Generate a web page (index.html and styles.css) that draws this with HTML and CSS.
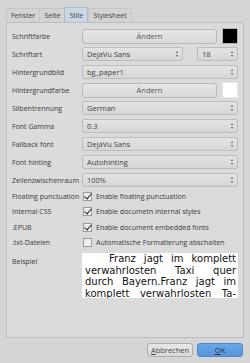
FILE: index.html
```html
<!DOCTYPE html>
<html lang="de">
<head>
  <meta charset="UTF-8">
  <title>Einstellungen</title>
  <link rel="stylesheet" href="styles.css">
</head>
<body>
  <div class="dialog">
    <!-- Tab bar -->
    <div class="tabs">
      <span class="tab">Fenster</span>
      <span class="tab">Seite</span>
      <span class="tab active">Stile</span>
      <span class="tab">Stylesheet</span>
    </div>

    <!-- Tab page -->
    <div class="page">
      <div class="row">
        <span class="label">Schriftfarbe</span>
        <div class="ctl">
          <span class="btn grow">Ändern</span>
          <span class="swatch black"></span>
        </div>
      </div>
      <div class="row">
        <span class="label">Schriftart</span>
        <div class="ctl split">
          <span class="combo font">DejaVu Sans<i class="arr"></i></span>
          <span class="combo size">18<i class="arr"></i></span>
        </div>
      </div>
      <div class="row">
        <span class="label">Hintergrundbild</span>
        <div class="ctl"><span class="combo grow">bg_paper1<i class="arr"></i></span></div>
      </div>
      <div class="row">
        <span class="label">Hintergrundfarbe</span>
        <div class="ctl">
          <span class="btn grow">Ändern</span>
          <span class="swatch white"></span>
        </div>
      </div>
      <div class="row">
        <span class="label">Silbentrennung</span>
        <div class="ctl"><span class="combo grow">German<i class="arr"></i></span></div>
      </div>
      <div class="row">
        <span class="label">Font Gamma</span>
        <div class="ctl"><span class="combo grow">0.3<i class="arr"></i></span></div>
      </div>
      <div class="row">
        <span class="label">Fallback font</span>
        <div class="ctl"><span class="combo grow">DejaVu Sans<i class="arr"></i></span></div>
      </div>
      <div class="row">
        <span class="label">Font hinting</span>
        <div class="ctl"><span class="combo grow">Autohinting<i class="arr"></i></span></div>
      </div>
      <div class="row">
        <span class="label">Zeilenzwischenraum</span>
        <div class="ctl"><span class="combo grow">100%<i class="arr"></i></span></div>
      </div>

      <div class="row check-row">
        <span class="label">Floating punctuation</span>
        <div class="ctl"><span class="box checked"></span>Enable floating punctuation</div>
      </div>
      <div class="row check-row">
        <span class="label">Internal CSS</span>
        <div class="ctl"><span class="box checked"></span>Enable documetn internal styles</div>
      </div>
      <div class="row check-row">
        <span class="label">.EPUB</span>
        <div class="ctl"><span class="box checked"></span>Enable document embedded fonts</div>
      </div>
      <div class="row check-row">
        <span class="label">.txt-Dateien</span>
        <div class="ctl"><span class="box"></span>Automatische Formatierung abschalten</div>
      </div>

      <div class="row sample-row">
        <span class="label">Beispiel</span>
        <div class="sample">
          <span class="line first">Franz jagt im komplett</span>
          <span class="line">verwahrlosten Taxi quer</span>
          <span class="line">durch Bayern.Franz jagt im</span>
          <span class="line">komplett verwahrlosten Ta-</span>
        </div>
      </div>
    </div>

    <!-- Dialog buttons -->
    <div class="footer">
      <span class="btn action"><u>A</u>bbrechen</span>
      <span class="btn action ok"><u>O</u>K</span>
    </div>
  </div>
</body>
</html>
```

FILE: styles.css
```css
/* Dialog window */
body {
  margin: 0;
  background: #d5d5d5;
  font-family: "Open Sans", "Noto Sans", sans-serif;
  font-size: 7px;
  color: #3a3a3a;
}

.dialog {
  width: 250px;
  height: 363px;
  box-sizing: border-box;
  padding: 7px 6px 0 6px;
}

/* Tabs */
.tabs {
  display: flex;
  height: 15px;
}

.tab {
  display: flex;
  align-items: center;
  padding: 0 4px;
  border: 1px solid #c6c6c6;
  border-bottom: none;
  border-right: none;
  background: #d3d3d3;
  color: #444;
  margin-top: 1px;
}

.tab:nth-child(4) {
  border-right: 1px solid #c6c6c6;
}

.tab.active {
  background: #cad8e6;
  border: 1px solid #a9bccf;
  border-bottom: none;
  margin-top: 0;
}

/* Tab page */
.page {
  height: 316px;
  box-sizing: border-box;
  background: #dbdbdb;
  border: 1px solid #bdbdbd;
  padding: 4px 5px 0 5px;
}

.row {
  display: grid;
  grid-template-columns: 70px 1fr;
  align-items: center;
  height: 18px;
}

.label {
  white-space: nowrap;
}

.ctl {
  display: flex;
  align-items: center;
  gap: 5px;
}

.ctl.split {
  gap: 14px;
}

.grow {
  flex: 1;
}

/* Push buttons */
.btn {
  height: 15px;
  box-sizing: border-box;
  display: flex;
  align-items: center;
  justify-content: center;
  border: 1px solid #b9b9b9;
  border-radius: 3px;
  background: linear-gradient(#e6e6e6, #d9d9d9);
  color: #555;
  font-size: 7.5px;
}

.swatch {
  width: 16px;
  height: 16px;
  box-sizing: border-box;
  border: 1px solid #b5b5b5;
}

.swatch.black {
  background: #000;
}

.swatch.white {
  background: #fff;
  border-color: #e6e6e6;
}

/* Combo boxes */
.combo {
  position: relative;
  height: 14px;
  box-sizing: border-box;
  display: flex;
  align-items: center;
  padding-left: 4px;
  border: 1px solid #bcbcbc;
  border-radius: 2px;
  background: linear-gradient(#e3e3e3, #d6d6d6);
  color: #444;
  font-size: 7.5px;
}

.combo.font {
  width: 101px;
}

.combo.size {
  width: 41px;
}

.arr {
  position: absolute;
  right: 4px;
  top: 3px;
  width: 0;
  height: 0;
  border-left: 1.5px solid transparent;
  border-right: 1.5px solid transparent;
  border-bottom: 2px solid #555;
}

.arr::after {
  content: "";
  position: absolute;
  left: -1.5px;
  top: 4px;
  border-left: 1.5px solid transparent;
  border-right: 1.5px solid transparent;
  border-top: 2px solid #555;
}

/* Check boxes */
.check-row {
  height: 15.3px;
}

.check-row .ctl {
  gap: 4px;
  white-space: nowrap;
  padding-left: 1px;
}

.box {
  position: relative;
  width: 9px;
  height: 9px;
  box-sizing: border-box;
  border: 1px solid #9a9a9a;
  background: #eeeeee;
}

.box.checked::after {
  content: "";
  position: absolute;
  left: 2px;
  top: -1px;
  width: 3px;
  height: 6px;
  border-right: 1.5px solid #222;
  border-bottom: 1.5px solid #222;
  transform: rotate(40deg);
}

/* Sample text */
.sample-row {
  height: auto;
  align-items: start;
  margin-top: 3px;
}

.sample-row .label {
  margin-top: 4px;
}

.sample {
  height: 45px;
  overflow: hidden;
  background: #fff;
  padding: 0 2px 0 3px;
  font-family: "DejaVu Sans", sans-serif;
  font-size: 10px;
  line-height: 11.5px;
  color: #111;
}

.line {
  display: block;
  text-align: justify;
  text-align-last: justify;
  white-space: nowrap;
}

.line.first {
  padding-left: 24px;
}

/* Footer */
.footer {
  display: flex;
  justify-content: flex-end;
  gap: 4px;
  padding: 5px 1px 0 0;
}

.btn.action {
  width: 46px;
  height: 14px;
  border-color: #adadad;
  color: #444;
}

.btn.ok {
  background: linear-gradient(#6aa8e8, #5594dc);
  border-color: #4d86c8;
  color: #234;
}
```
